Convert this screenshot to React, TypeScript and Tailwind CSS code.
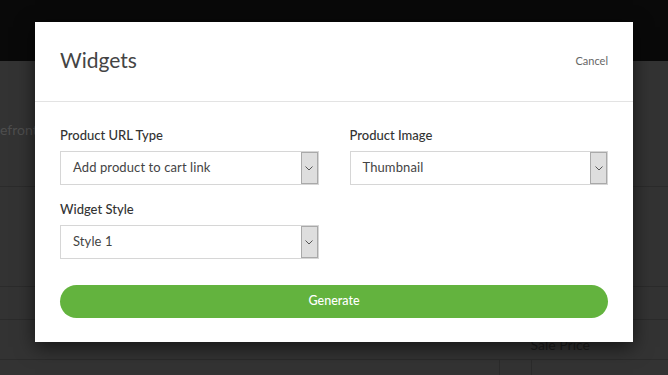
import { ReactNode } from "react";

const font = { fontFamily: "Lato, 'Open Sans', sans-serif" };

function Field({ label, value }: { label: string; value: string }) {
  return (
    <div className="flex flex-col">
      <label className="text-[13px] leading-4 font-medium text-[#333] mb-2">{label}</label>
      <div className="flex h-[34px] border border-[#d6d6d6] bg-white">
        <span className="flex-1 flex items-center pl-3 text-[13px] text-[#444] tracking-[0.1px]">{value}</span>
        <span className="w-[17px] h-[32px] flex items-center justify-center bg-[#dedede] border border-[#a9a9a9]">
          <svg width="8" height="5" viewBox="0 0 8 5" fill="none">
            <path d="M0.5 0.5 L4 4 L7.5 0.5" stroke="#555" strokeWidth="1" />
          </svg>
        </span>
      </div>
    </div>
  );
}

function Overlay({ children }: { children: ReactNode }) {
  return <div className="absolute inset-0 flex justify-center pt-[22px]">{children}</div>;
}

export default function App() {
  return (
    <div className="relative w-[668px] h-[375px] overflow-hidden bg-[#333333]" style={font}>
      {/* dimmed page behind */}
      <div className="h-[61px] bg-[#090909]" />
      <div className="h-[126px] border-b border-[#2b2b2b] pt-[58px] text-[14px] text-[#4e4e4e]">
        <span>efront</span>
      </div>
      <div className="h-[100px] border-b border-[#2b2b2b]" />
      <div className="h-[33px] border-b border-[#2b2b2b]" />
      <div className="h-[40px] flex justify-end items-end pr-[78px] pb-[4px] border-b border-[#2b2b2b]">
        <span className="text-[14px] text-[#1c1c1c]">Sale Price</span>
      </div>
      <div className="flex h-[20px]">
        <div className="w-[500px] border-r border-[#2b2b2b]" />
        <div className="w-[32px] border-r border-[#2b2b2b]" />
      </div>

      <Overlay>
        <div className="w-[598px] h-[320px] bg-white shadow-[0_5px_18px_rgba(0,0,0,0.6)] flex flex-col">
          <div className="h-[80px] flex items-center justify-between px-[25px] border-b border-[#e3e3e3]">
            <h2 className="text-[21px] text-[#444] pb-[4px]">Widgets</h2>
            <button className="text-[11px] text-[#666]">Cancel</button>
          </div>
          <div className="flex flex-col px-[25px] pt-[25px]">
            <div className="grid grid-cols-2 gap-x-[31px]">
              <Field label="Product URL Type" value="Add product to cart link" />
              <Field label="Product Image" value="Thumbnail" />
            </div>
            <div className="grid grid-cols-2 gap-x-[31px] mt-[16px]">
              <Field label="Widget Style" value="Style 1" />
            </div>
            <button className="mt-[26px] h-[33px] rounded-full bg-[#63b33e] text-white text-[12.5px] font-medium">
              Generate
            </button>
          </div>
        </div>
      </Overlay>
    </div>
  );
}
